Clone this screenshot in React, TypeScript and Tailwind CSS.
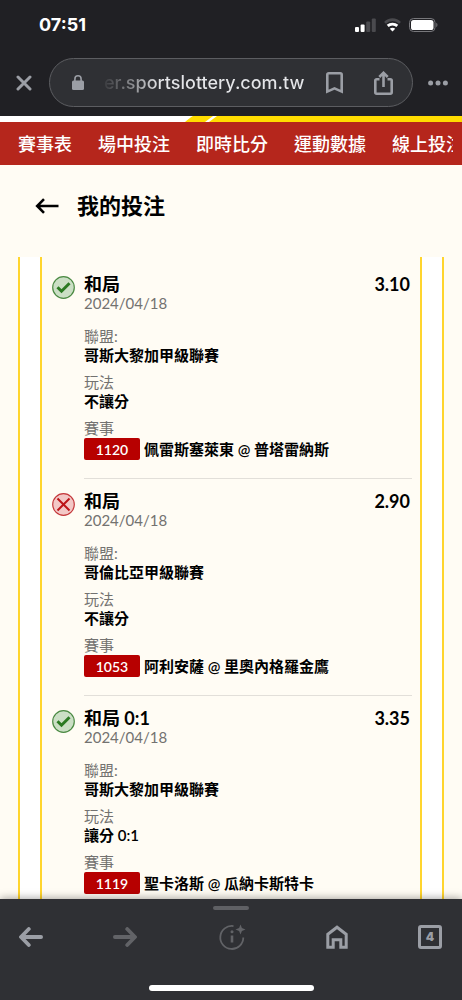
import type { ReactNode } from "react";

type Bet = {
  pick: string;
  odds: string;
  date: string;
  won: boolean;
  league: string;
  market: string;
  eventNo: string;
  match: string;
};

const NAV = ["賽事表", "場中投注", "即時比分", "運動數據", "線上投注"];

const BETS: Bet[] = [
  { pick: "和局", odds: "3.10", date: "2024/04/18", won: true, league: "哥斯大黎加甲級聯賽", market: "不讓分", eventNo: "1120", match: "佩雷斯塞萊東 @ 普塔雷納斯" },
  { pick: "和局", odds: "2.90", date: "2024/04/18", won: false, league: "哥倫比亞甲級聯賽", market: "不讓分", eventNo: "1053", match: "阿利安薩 @ 里奧內格羅金鷹" },
  { pick: "和局 0:1", odds: "3.35", date: "2024/04/18", won: true, league: "哥斯大黎加甲級聯賽", market: "讓分 0:1", eventNo: "1119", match: "聖卡洛斯 @ 瓜納卡斯特卡" },
];

function StatusBar() {
  return (
    <div className="flex h-[50px] items-center justify-between pl-[39px] pr-6 text-white">
      <span className="text-[18px] font-bold leading-6">07:51</span>
      <div className="flex items-center gap-2">
        <svg width="21" height="14" viewBox="0 0 21 14" aria-hidden="true">
          <rect x="0" y="9" width="4" height="5" rx="1" fill="#fff" />
          <rect x="5.6" y="6.5" width="4" height="7.5" rx="1" fill="#fff" />
          <rect x="11.2" y="3.5" width="4" height="10.5" rx="1" fill="#4a4a4e" />
          <rect x="16.8" y="0.5" width="4" height="13.5" rx="1" fill="#4a4a4e" />
        </svg>
        <svg width="17" height="14" viewBox="0 0 17 14" fill="none" aria-hidden="true">
          <path d="M1 4.800C5.200.6 11.800.6 16 4.800" stroke="#4a4a4e" strokeWidth="2.6" />
          <path d="M3.700 7.900c2.700-2.500 6.900-2.500 9.600 0" stroke="#fff" strokeWidth="2.8" />
          <path d="M8.500 13.400 5.800 10.700c1.500-1.300 3.900-1.300 5.400 0z" fill="#fff" />
        </svg>
        <svg width="29" height="14" viewBox="0 0 29 14" fill="none" aria-hidden="true">
          <rect x="0.5" y="0.5" width="25.5" height="13" rx="4" stroke="#77777b" />
          <rect x="2" y="2" width="22.5" height="10" rx="2.6" fill="#fff" />
          <path d="M27.300 4.800c1.500.6 1.500 3.800 0 4.400z" fill="#77777b" />
        </svg>
      </div>
    </div>
  );
}

function AddressBar() {
  return (
    <div className="flex items-center pb-[9px] pl-4 pr-[14px] pt-2 text-[#9b9ea5]">
      <button type="button" aria-label="關閉" className="mr-[17px]">
        <svg width="16" height="16" viewBox="0 0 16 16" fill="none" stroke="currentColor" strokeWidth="3" strokeLinecap="round">
          <path d="M2 2l12 12M14 2 2 14" />
        </svg>
      </button>
      <div className="flex h-[49px] min-w-0 flex-1 items-center rounded-full border border-[#5c5d61] bg-[#2f3034] pl-[22px] pr-[19px]">
        <svg width="12" height="15" viewBox="0 0 12 15" fill="none" className="shrink-0" aria-hidden="true">
          <rect x="0" y="5.5" width="12" height="9.5" rx="1.5" fill="currentColor" />
          <path d="M2.900 6V3.900a3.100 3.100 0 0 1 6.200 0V6" stroke="currentColor" strokeWidth="1.6" />
        </svg>
        <span className="ml-5 min-w-0 flex-1 overflow-hidden whitespace-nowrap bg-linear-to-r from-[#3a3b3f] to-[#e4e5e8] to-25% bg-clip-text text-[18px] font-medium leading-6 text-transparent">
          er.sportslottery.com.tw
        </span>
        <button type="button" aria-label="加入書籤" className="mr-[31px] shrink-0">
          <svg width="17" height="22" viewBox="0 0 17 22" fill="none" stroke="currentColor" strokeWidth="2.6">
            <path d="M1.300 19.600V2.700c0-.8.6-1.400 1.400-1.400h11.600c.8 0 1.400.6 1.400 1.400v16.900l-7.200-3.200z" />
          </svg>
        </button>
        <button type="button" aria-label="分享" className="shrink-0">
          <svg width="19" height="24" viewBox="0 0 19 24" fill="none" stroke="currentColor" strokeWidth="2.6">
            <path d="M5.500 8.200H2.700c-.8 0-1.400.6-1.400 1.400v11.700c0 .8.6 1.400 1.400 1.400h13.600c.8 0 1.400-.6 1.400-1.400V9.600c0-.8-.6-1.400-1.400-1.400h-2.800M9.500 16V2.400M5.300 6l4.200-4.200L13.700 6" />
          </svg>
        </button>
      </div>
      <button type="button" aria-label="更多" className="ml-[15px]">
        <svg width="20" height="6" viewBox="0 0 20 6" fill="currentColor">
          <circle cx="2.6" cy="3" r="2.5" />
          <circle cx="10" cy="3" r="2.5" />
          <circle cx="17.4" cy="3" r="2.5" />
        </svg>
      </button>
    </div>
  );
}

function SiteNav() {
  return (
    <>
      <div className="flex h-[6px] bg-white">
        <svg width="35" height="6" viewBox="0 0 35 6" className="ml-[184px] shrink-0" aria-hidden="true">
          <path d="M1 6C4 3.500 6 1.500 9 0h20l-8 6z" fill="#ffdc00" />
          <path d="M25 6l8-6h2v6z" fill="#ffdc00" />
        </svg>
        <div className="flex-1 bg-[#ffdc00]" />
      </div>
      <nav className="flex h-[43px] items-center bg-[#b5261c] pl-[18px] pr-[9px]">
        <div className="flex min-w-0 flex-1 gap-[26px] overflow-hidden whitespace-nowrap text-[18px] font-medium leading-6 text-white">
          {NAV.map((item) => (
            <a key={item} href="#" className="shrink-0">{item}</a>
          ))}
        </div>
      </nav>
    </>
  );
}

function ResultIcon({ won }: { won: boolean }) {
  return won ? (
    <svg width="23" height="23" viewBox="0 0 23 23" fill="none" className="mt-[2px] shrink-0" role="img" aria-label="中獎">
      <circle cx="11.5" cy="11.5" r="10.8" fill="#cbdfc5" stroke="#4b8a43" strokeWidth="1.2" />
      <path d="m5.500 11.200 4 4 8-8" stroke="#2b7a22" strokeWidth="3" />
    </svg>
  ) : (
    <svg width="23" height="23" viewBox="0 0 23 23" fill="none" className="mt-[2px] shrink-0" role="img" aria-label="未中獎">
      <circle cx="11.5" cy="11.5" r="10.8" fill="#f3c8c6" stroke="#c4373a" strokeWidth="1.2" />
      <path d="m5.500 5.500 12 12M17.500 5.500l-12 12" stroke="#bd1518" strokeWidth="2" />
    </svg>
  );
}

function Field({ label, children }: { label: string; children: ReactNode }) {
  return (
    <div>
      <dt className="text-[#737270]">{label}</dt>
      <dd className="font-semibold text-black">{children}</dd>
    </div>
  );
}

function BetRow({ bet }: { bet: Bet }) {
  return (
    <li className="flex gap-[9px] pt-3">
      <ResultIcon won={bet.won} />
      <div className="min-w-0 flex-1 border-b border-[#e2dfd9] pb-[18px] text-[15px] leading-[19px]">
        <div className="flex justify-between pr-[2px] text-[18px] font-bold leading-5">
          <h2>{bet.pick}</h2>
          <span>{bet.odds}</span>
        </div>
        <p className="leading-[18px] text-[#737270]">{bet.date}</p>
        <dl className="mt-[15px] flex flex-col gap-2">
          <Field label="聯盟:">{bet.league}</Field>
          <Field label="玩法">{bet.market}</Field>
          <Field label="賽事">
            <span className="flex h-[22px] items-center gap-1 whitespace-nowrap">
              <span className="flex h-[22px] w-14 items-center justify-center rounded-[2px] bg-[#b70000] text-[14px] text-white">{bet.eventNo}</span>
              {bet.match}
            </span>
          </Field>
        </dl>
      </div>
    </li>
  );
}

function BottomBar() {
  return (
    <footer className="relative flex h-[101px] shrink-0 flex-col items-center bg-[#2f3034] text-[#9b9ea5] shadow-[0_-1px_8px_rgba(0,0,0,0.35)]">
      <div className="mt-[7px] h-1 w-9 rounded-full bg-[#5f6064]" />
      <div className="mt-[11px] flex h-8 w-full items-center justify-between pl-[19px] pr-5">
        <button type="button" aria-label="上一頁">
          <svg width="24" height="20" viewBox="0 0 24 20" fill="none" stroke="currentColor" strokeWidth="3.8" strokeLinecap="round" strokeLinejoin="round">
            <path d="M22.100 10H2.500M9.800 2 2 10l7.800 8" />
          </svg>
        </button>
        <button type="button" aria-label="下一頁" className="text-[#626367]">
          <svg width="24" height="20" viewBox="0 0 24 20" fill="none" stroke="currentColor" strokeWidth="3.8" strokeLinecap="round" strokeLinejoin="round">
            <path d="M1.900 10h19.600M14.200 2 22 10l-7.800 8" />
          </svg>
        </button>
        <button type="button" aria-label="網頁資訊" className="px-[10px] text-[#626367]">
          <svg width="28" height="28" viewBox="0 0 28 28" fill="none" stroke="currentColor" strokeWidth="1.8">
            <path d="M15.500 3.100A11.500 11.500 0 1 0 25.300 14.500" />
            <path d="M14 12.500v7" strokeWidth="2.6" />
            <circle cx="14" cy="8.800" r="1.5" fill="currentColor" stroke="none" />
            <path d="m22.500 1.500 1.400 3.600 3.600 1.400-3.600 1.400-1.400 3.600-1.400-3.600-3.600-1.400 3.600-1.400z" fill="currentColor" stroke="none" />
          </svg>
        </button>
        <button type="button" aria-label="首頁">
          <svg width="22" height="24" viewBox="0 0 22 24" fill="none" stroke="currentColor" strokeWidth="3">
            <path d="M1.800 22.200V9.300L11 2.200l9.200 7.100v12.900h-5.400v-7.400H7.200v7.400z" />
          </svg>
        </button>
        <button type="button" aria-label="分頁" className="flex size-6 items-center justify-center rounded-[3px] border-3 border-current font-[Inter,sans-serif] text-[12px] font-black leading-4">
          4
        </button>
      </div>
      <div className="mt-8 h-[6px] w-[165px] rounded-full bg-white" />
    </footer>
  );
}

export default function App() {
  return (
    <div className="flex h-screen flex-col bg-[#fffcf4] font-[Lato,'Noto_Sans_CJK_TC',sans-serif] text-black">
      <header className="shrink-0">
        <div className="bg-[#202024] font-[Inter,sans-serif]">
          <StatusBar />
          <AddressBar />
        </div>
        <SiteNav />
      </header>
      <main className="min-h-0 flex-1 overflow-y-auto [scrollbar-width:none]">
        <div className="flex h-[92px] items-start gap-[18px] pl-[35px] pt-[26px]">
          <button type="button" aria-label="返回" className="mt-[7px]">
            <svg width="24" height="16" viewBox="0 0 24 16" fill="none" stroke="currentColor" strokeWidth="2.6">
              <path d="M23.500 8H2.500M9 1.200 2.200 8 9 14.800" />
            </svg>
          </button>
          <h1 className="text-[22px] font-semibold leading-[30px]">我的投注</h1>
        </div>
        <section className="mx-[18px] border-x-2 border-[#ffd52e] bg-white px-5">
          <ul className="border-x-2 border-[#ffd52e] bg-[#fffcf4] pl-[10px] pr-2 pt-[5px]">
            {BETS.map((bet) => (
              <BetRow key={bet.eventNo} bet={bet} />
            ))}
          </ul>
        </section>
      </main>
      <BottomBar />
    </div>
  );
}
